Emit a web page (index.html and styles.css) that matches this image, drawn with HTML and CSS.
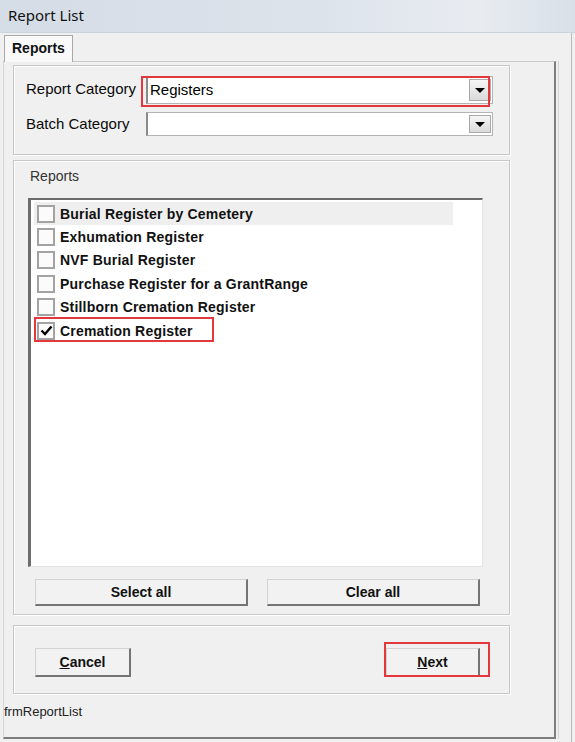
FILE: index.html
```html
<!DOCTYPE html>
<html lang="en">
  <head>
    <meta charset="UTF-8" />
    <meta name="viewport" content="width=device-width, initial-scale=1.0" />
    <title>Report List</title>
    <link rel="stylesheet" href="styles.css">
  </head>

  <body>
    <!-- title bar -->
    <div class="titlebar">Report List</div>

    <div class="client">
      <!-- tab strip -->
      <div class="tabs">
        <div class="tab">Reports</div>
      </div>

      <div class="page">
        <!-- category pickers -->
        <div class="group group-cat">
          <div class="field">
            <label class="field-label">Report Category</label>
            <div class="combo combo-big">
              <span class="combo-value">Registers</span>
              <span class="combo-btn"><span class="arrow-down"></span></span>
            </div>
          </div>
          <div class="field field-batch">
            <label class="field-label">Batch Category</label>
            <div class="combo">
              <span class="combo-value"></span>
              <span class="combo-btn"><span class="arrow-down"></span></span>
            </div>
          </div>
          <div class="mark mark-cat"></div>
        </div>

        <!-- report list -->
        <div class="group group-reports">
          <div class="group-title">Reports</div>
          <div class="listbox">
            <div class="item item-current"><span class="check"></span>Burial Register by Cemetery</div>
            <div class="item"><span class="check"></span>Exhumation Register</div>
            <div class="item"><span class="check"></span>NVF Burial Register</div>
            <div class="item"><span class="check"></span>Purchase Register for a GrantRange</div>
            <div class="item"><span class="check"></span>Stillborn Cremation Register</div>
            <div class="item item-marked">
              <span class="check">
                <svg width="13" height="13" viewBox="0 0 13 13"><path d="M1.5 6.5 L5 10 L11.5 2.5" fill="none" stroke="#000" stroke-width="2.4"/></svg>
              </span>Cremation Register
            </div>
          </div>
          <div class="btn-row">
            <button class="btn btn-wide">Select all</button>
            <button class="btn btn-wide">Clear all</button>
          </div>
        </div>

        <!-- navigation -->
        <div class="group group-nav">
          <button class="btn btn-cancel"><u>C</u>ancel</button>
          <span class="next-wrap">
            <button class="btn btn-next"><u>N</u>ext</button>
          </span>
        </div>

        <div class="form-name">frmReportList</div>
      </div>
    </div>
  </body>
</html>
```

FILE: styles.css
```css
/* Report List dialog */
body {
  margin: 0;
  width: 575px;
  height: 742px;
  overflow: hidden;
  background-color: #f0f0f0;
  font-family: "Liberation Sans", Arial, sans-serif;
  color: #111;
}

.titlebar {
  height: 33px;
  box-sizing: border-box;
  padding: 5px 0 0 8px;
  font-family: "Noto Sans", "Open Sans", sans-serif;
  font-size: 15px;
  color: #111;
  background: linear-gradient(to right, #d4dce6, #dde3eb 55%, #e8ecf1 83%, #d9e0e8);
  border-bottom: 1px solid #ccd3dc;
}

.client {
  width: 571px;
  height: 709px;
  border-right: 1px solid #b9b9b9;
}

/* tabs */
.tabs {
  height: 28px;
  display: flex;
  padding-left: 4px;
}

.tab {
  position: relative;
  z-index: 1;
  margin-top: 2px;
  width: 69px;
  height: 27px;
  box-sizing: border-box;
  padding: 4px 0 0 7px;
  font-size: 14px;
  font-weight: bold;
  background-color: #f9f9f9;
  border: 1px solid #a9a9a9;
  border-bottom: none;
}

.page {
  margin-left: 3px;
  width: 553px;
  height: 678px;
  box-sizing: border-box;
  padding: 3px 0 0 9px;
  border-top: 1px solid #c9c9c9;
  border-left: 1px solid #d6d6d6;
  border-right: 2px solid #7d7d7d;
  border-bottom: 2px solid #7d7d7d;
  box-shadow: 2px 0 0 #f0f0f0, 3px 0 0 #d2d2d2;
}

/* group boxes */
.group {
  position: relative;
  width: 497px;
  box-sizing: border-box;
  border: 1px solid #c8c8c8;
  box-shadow: inset 1px 1px 0 #fff, 1px 1px 0 #fff;
}

.group-cat {
  height: 90px;
  padding: 10px 0 0 12px;
}

.field {
  display: flex;
  align-items: center;
  height: 28px;
}

.field-label {
  width: 120px;
  margin-top: -4px;
  font-size: 15px;
  color: #0a0a0a;
}

.field-batch {
  margin-top: 8px;
  height: 24px;
}

.field-batch .field-label {
  margin-top: -2px;
}

.combo {
  display: flex;
  width: 347px;
  height: 100%;
  box-sizing: border-box;
  background-color: #fff;
  border: 1px solid #b4b4b4;
  border-left: 2px solid #8a8a8a;
}

.combo-value {
  flex: 1;
  padding: 4px 0 0 2px;
  font-size: 15px;
  color: #000;
}

.combo-btn {
  width: 22px;
  margin: 2px 1px;
  box-sizing: border-box;
  border: 1px solid #a9a9a9;
  background: linear-gradient(#f6f6f6, #dadada);
  display: flex;
  align-items: center;
  justify-content: center;
}

.arrow-down {
  width: 0;
  height: 0;
  border-left: 5px solid transparent;
  border-right: 5px solid transparent;
  border-top: 5px solid #000;
}

/* red annotation boxes */
.mark {
  position: absolute;
  border: 2px solid #e3393c;
}

.mark-cat {
  left: 127px;
  top: 10px;
  width: 349px;
  height: 31px;
  box-sizing: border-box;
}

.group-reports {
  margin-top: 5px;
  height: 455px;
  padding: 6px 0 0 14px;
}

.group-title {
  padding-left: 2px;
  line-height: 18px;
  font-size: 14px;
  color: #333;
}

.listbox {
  margin-top: 13px;
  width: 455px;
  height: 369px;
  box-sizing: border-box;
  padding-top: 2px;
  background-color: #fff;
  border-top: 2px solid #6c6c6c;
  border-left: 3px solid #6c6c6c;
  border-right: 1px solid #e4e4e4;
  border-bottom: 1px solid #e4e4e4;
}

.item {
  position: relative;
  display: flex;
  align-items: center;
  width: 419px;
  height: 23.4px;
  margin-left: 3px;
  padding-left: 3px;
  box-sizing: border-box;
  font-size: 14px;
  font-weight: bold;
  letter-spacing: 0.2px;
}

.item-current {
  background-color: #efefef;
}

.item-marked::after {
  content: "";
  position: absolute;
  left: 0;
  top: -2px;
  width: 180px;
  height: 25px;
  box-sizing: border-box;
  border: 2px solid #e3393c;
}

.check {
  width: 18px;
  height: 18px;
  margin-right: 5px;
  box-sizing: border-box;
  border: 2px solid #a3a3a3;
  background-color: #fbfbfb;
  display: flex;
  align-items: center;
  justify-content: center;
}

.btn-row {
  display: flex;
  gap: 19px;
  margin-top: 12px;
  padding-left: 7px;
}

.btn {
  height: 27px;
  padding: 0;
  box-sizing: border-box;
  font-family: "Liberation Sans", Arial, sans-serif;
  font-size: 14px;
  font-weight: bold;
  color: #111;
  background-color: #f2f2f2;
  border-top: 1px solid #d3d3d3;
  border-left: 1px solid #d3d3d3;
  border-right: 2px solid #747474;
  border-bottom: 2px solid #747474;
}

.btn-wide {
  width: 213px;
}

.group-nav {
  margin-top: 10px;
  height: 69px;
  padding: 22px 29px 0 21px;
  display: flex;
  justify-content: space-between;
  align-items: flex-start;
}

.btn-cancel {
  width: 96px;
  height: 29px;
}

.next-wrap {
  position: relative;
}

.next-wrap::after {
  content: "";
  position: absolute;
  left: -2px;
  top: -6px;
  width: 106px;
  height: 35px;
  box-sizing: border-box;
  border: 2px solid #e3393c;
}

.btn-next {
  width: 94px;
  height: 29px;
}

.form-name {
  margin: 10px 0 0 -9px;
  line-height: 16px;
  font-size: 13px;
  color: #222;
}
```
